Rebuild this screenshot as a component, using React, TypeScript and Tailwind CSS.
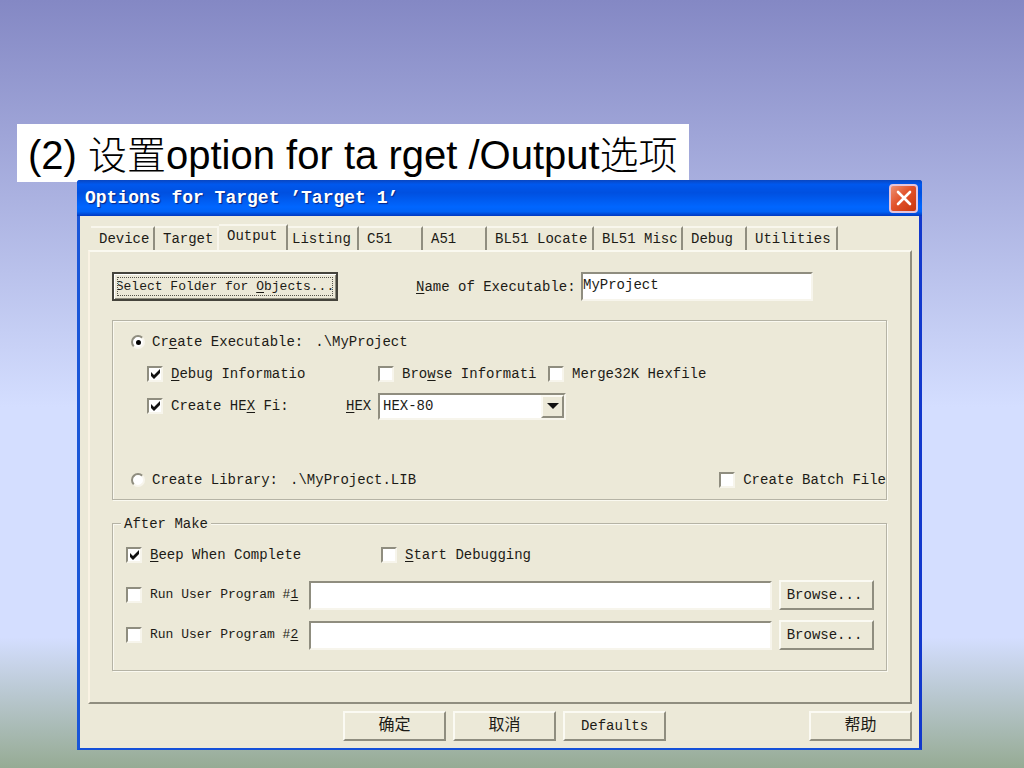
import type { ReactNode } from "react";

const tabs = [
  { name: "Device", size: "w-16 pl-2" },
  { name: "Target", size: "w-16 pl-2" },
  { name: "Output", size: "w-[69px] pl-2", active: true },
  { name: "Listing", size: "w-[71px] pl-1" },
  { name: "C51", size: "w-16 pl-2" },
  { name: "A51", size: "w-16 pl-2" },
  { name: "BL51 Locate", size: "w-[107px] pl-2" },
  { name: "BL51 Misc", size: "w-[89px] pl-2" },
  { name: "Debug", size: "w-16 pl-2" },
  { name: "Utilities", size: "w-[91px] pl-2" },
];

const sunken =
  "border-2 border-t-[#8f8d7f] border-l-[#8f8d7f] border-r-[#f7f5ec] border-b-[#f7f5ec] bg-white";
const raised =
  "border-2 border-t-[#fbfaf3] border-l-[#fbfaf3] border-r-[#8f8d7f] border-b-[#8f8d7f] bg-[#ece9d8]";
const etched = "border border-[#b5b3a5] shadow-[1px_1px_0_#faf9f0,inset_1px_1px_0_#faf9f0]";

function Key({ children }: { children: ReactNode }) {
  return <span className="underline underline-offset-2">{children}</span>;
}

function Check({
  children,
  checked,
  className = "",
}: {
  children: ReactNode;
  checked?: boolean;
  className?: string;
}) {
  return (
    <label className={`flex shrink-0 items-center gap-2 whitespace-nowrap ${className}`}>
      <span className="relative h-4 w-4 shrink-0">
        <input
          type="checkbox"
          defaultChecked={checked}
          className={`peer block h-4 w-4 appearance-none ${sunken}`}
        />
        <svg
          viewBox="0 0 16 16"
          className="pointer-events-none absolute inset-0 hidden h-4 w-4 peer-checked:block"
          aria-hidden
        >
          <path d="M4 6 7 9 13 3V7L7 13 4 10Z" fill="#111" />
        </svg>
      </span>
      <span>{children}</span>
    </label>
  );
}

function Radio({ children, checked }: { children: ReactNode; checked?: boolean }) {
  return (
    <label className="flex shrink-0 items-center gap-[7px] whitespace-nowrap">
      <span className="relative h-[14px] w-[14px] shrink-0">
        <input
          type="radio"
          name="kind"
          defaultChecked={checked}
          className={`peer block h-[14px] w-[14px] appearance-none rounded-full ${sunken}`}
        />
        <span className="pointer-events-none absolute top-[5px] left-[5px] hidden h-[5px] w-[5px] rounded-full bg-black peer-checked:block" />
      </span>
      <span>{children}</span>
    </label>
  );
}

function Button({ children, className = "" }: { children: ReactNode; className?: string }) {
  return (
    <button type="button" className={`h-[30px] shrink-0 ${raised} ${className}`}>
      {children}
    </button>
  );
}

function UserProgram({ n }: { n: number }) {
  return (
    <div className="flex h-10 items-center">
      <Check className="w-[176px] text-[13px]">
        Run User Program #<Key>{n}</Key>
      </Check>
      <input
        type="text"
        aria-label={`User program ${n}`}
        className={`ml-[7px] h-[29px] min-w-0 flex-1 px-1 ${sunken}`}
      />
      <Button className="ml-[7px] w-[95px] pr-1">Browse...</Button>
    </div>
  );
}

function OutputPanel() {
  return (
    <div className="border-2 border-t-[#faf9f0] border-r-[#8f8d7f] border-b-[#8f8d7f] border-l-[#faf3e4] pt-5 pr-[23px] pb-[31px] pl-[22px]">
      <div className="flex items-center">
        <button
          type="button"
          className="flex h-[29px] w-[226px] shrink-0 border-2 border-[#45443c] p-[3px] text-[13px] shadow-[inset_1px_1px_0_#fff,inset_-1px_-1px_0_#8f8d7f]"
        >
          <span className="flex h-full w-full items-center justify-center overflow-hidden border border-dotted border-[#55534a] whitespace-nowrap">
            <span>
              Select Folder for <Key>O</Key>bjects...
            </span>
          </span>
        </button>
        <label htmlFor="exe" className="ml-[78px] w-[165px] shrink-0 whitespace-nowrap">
          <Key>N</Key>ame of Executable:
        </label>
        <input
          id="exe"
          type="text"
          defaultValue="MyProject"
          className={`mr-[74px] h-[29px] min-w-0 flex-1 pb-1 ${sunken}`}
        />
      </div>

      <fieldset aria-label="Output type" className={`mt-[19px] pt-[5px] pb-[3px] pl-[18px] ${etched}`}>
        <div className="flex h-8 items-center gap-3">
          <Radio checked>
            Cr<Key>e</Key>ate Executable:
          </Radio>
          <span>.\MyProject</span>
        </div>
        <div className="flex h-8 items-center pl-4">
          <Check checked className="w-[231px]">
            <Key>D</Key>ebug Informatio
          </Check>
          <Check className="w-[170px]">
            Bro<Key>w</Key>se Informati
          </Check>
          <Check>Merge32K Hexfile</Check>
        </div>
        <div className="flex h-8 items-center pl-4">
          <Check checked className="w-[199px]">
            Create HE<Key>X</Key> Fi:
          </Check>
          <label htmlFor="hex" className="w-8">
            <Key>H</Key>EX
          </label>
          <span className="relative">
            <select
              id="hex"
              className={`block h-[27px] w-[188px] appearance-none pl-[3px] ${sunken}`}
            >
              <option>HEX-80</option>
            </select>
            <span
              className={`pointer-events-none absolute top-[2px] right-[2px] grid h-[23px] w-[23px] place-items-center ${raised}`}
            >
              <svg viewBox="0 0 12 6" className="h-[6px] w-3" aria-hidden>
                <path d="M0 0H12L6 6Z" fill="#111" />
              </svg>
            </span>
          </span>
        </div>
        <div className="mt-[42px] flex h-8 items-center gap-3">
          <Radio>Create Library:</Radio>
          <span>.\MyProject.LIB</span>
          <Check className="ml-auto">Create Batch File</Check>
        </div>
      </fieldset>

      <div
        role="group"
        aria-labelledby="after-make"
        className={`relative mt-[23px] pr-[12px] pb-[15px] pl-[13px] pt-[11px] ${etched}`}
      >
        <h3
          id="after-make"
          className="absolute -top-[10px] left-2 bg-[#ece9d8] px-[3px] leading-5"
        >
          After Make
        </h3>
        <div className="flex h-10 items-center">
          <Check checked className="w-[255px]">
            <Key>B</Key>eep When Complete
          </Check>
          <Check>
            <Key>S</Key>tart Debugging
          </Check>
        </div>
        <UserProgram n={1} />
        <UserProgram n={2} />
      </div>
    </div>
  );
}

export default function App() {
  return (
    <main className="min-h-screen bg-[linear-gradient(#8488c4_0%,#d4deff_53%,#d4deff_83%,#96ab94_100%)] pt-[124px] pb-[18px]">
      <h1 className="ml-[17px] flex h-[58px] w-fit items-center bg-white px-[11px] pt-1 font-['Liberation_Sans','Noto_Sans_CJK_SC',sans-serif] text-[40px] leading-none whitespace-pre text-black">
        (2) <span className="text-[39px] font-light">设置</span>option for ta rget /Output
        <span className="text-[39px] font-light">选项</span>
      </h1>

      <section className="relative -mt-[2px] mr-[102px] ml-[77px] rounded-t-[3px] bg-[#0a50e0] font-['Liberation_Mono','Noto_Sans_CJK_SC',monospace] text-[14px] leading-5 text-[#1c1b16]">
        <header className="flex h-9 items-center rounded-t-[3px] bg-[linear-gradient(#0a46c0_0%,#0058ee_12%,#0050e0_35%,#0066ff_75%,#0062f6_88%,#0038c0_100%)] pr-1 pl-2">
          <h2 className="flex-1 text-[18px] font-bold whitespace-nowrap text-white [text-shadow:1px_1px_1px_#0a2480]">
            Options for Target ’Target 1’
          </h2>
          <button
            type="button"
            aria-label="Close"
            className="grid h-[29px] w-[29px] place-items-center rounded-[4px] border-2 border-[#e3c4dc] bg-[linear-gradient(135deg,#ee9072,#e2532c_45%,#c8350c)]"
          >
            <svg viewBox="0 0 16 16" className="h-4 w-4" aria-hidden>
              <path d="M2 2 14 14M14 2 2 14" stroke="#fff" strokeWidth="2.6" strokeLinecap="round" />
            </svg>
          </button>
        </header>

        <div className="border-r-[3px] border-b-2 border-l-[3px] border-r-[#1238cc] border-b-[#1450d8] border-l-[#1a56d8] bg-[#ece9d8] pt-2 pr-[7px] pb-[7px] pl-2">
          <div role="tablist" className="flex items-end pl-[3px]">
            {tabs.map((t) => (
              <button
                key={t.name}
                type="button"
                role="tab"
                aria-selected={!!t.active}
                className={`shrink-0 border-t-2 border-r-2 border-t-[#f8f6ec] text-left whitespace-nowrap ${t.size} ${
                  t.name === "Target" ? "border-r-[#f8f6ec]" : "border-r-[#8f8d7f]"
                } ${t.active ? "h-[26px] pb-1" : "h-6"}`}
              >
                {t.name}
              </button>
            ))}
          </div>
          <OutputPanel />
          <div className="flex justify-end gap-[7px] pt-[7px]">
            <Button className="w-[103px] text-base">确定</Button>
            <Button className="w-[103px] text-base">取消</Button>
            <Button className="w-[103px]">Defaults</Button>
            <Button className="ml-[136px] w-[103px] text-base">帮助</Button>
          </div>
        </div>
      </section>
    </main>
  );
}
